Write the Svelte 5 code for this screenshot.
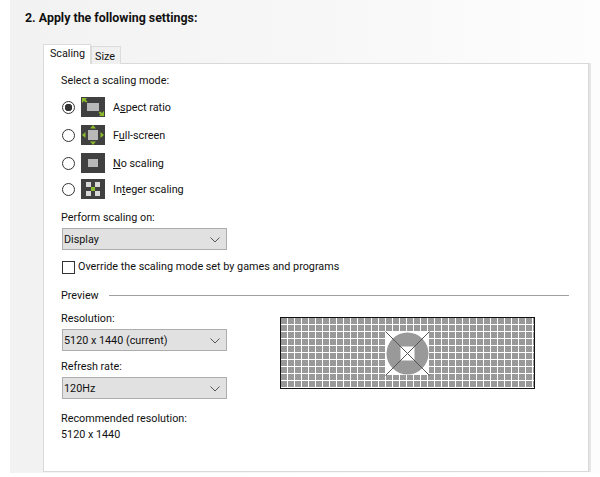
<script lang="ts">
	const modes = [
		{ id: 'aspect', pre: 'A', key: 's', post: 'pect ratio' },
		{ id: 'full', pre: 'F', key: 'u', post: 'll-screen' },
		{ id: 'none', pre: '', key: 'N', post: 'o scaling' },
		{ id: 'integer', pre: 'In', key: 't', post: 'eger scaling' }
	];
	let mode = $state('aspect');
	let override = $state(false);
	let tab = $state('Scaling');
</script>

{#snippet chevron()}
	<svg class="chevron" width="10" height="6" viewBox="0 0 10 6" aria-hidden="true">
		<path d="M0.5 0.5 L5 5 L9.5 0.5" fill="none" stroke="#555" stroke-width="1" />
	</svg>
{/snippet}

{#snippet modeIcon(id: string)}
	<svg width="24" height="20" viewBox="0 0 24 20" aria-hidden="true">
		<rect width="24" height="20" fill="#404040" />
		{#if id === 'aspect'}
			<rect x="6" y="6" width="12" height="8" fill="#b8b8b8" />
			<path d="M1 1h5L4.500 2.500l2 2-1.500 1-2-1.500L1 6z" fill="#8dbb2e" />
			<path d="M23 19h-5l1.500-1.500-2-2 1.500-1 2 1.500L23 14z" fill="#8dbb2e" />
		{:else if id === 'full'}
			<rect x="7" y="5" width="10" height="10" fill="#b8b8b8" />
			<path d="M12 0l3 3.500H9zM12 20l-3-3.500h6zM1 10l3.500-3v6zM23 10l-3.500 3V7z" fill="#8dbb2e" />
		{:else if id === 'none'}
			<rect x="7" y="6" width="10" height="8" fill="#b8b8b8" />
		{:else}
			<rect x="5" y="3" width="5" height="5" fill="#d8d8d8" />
			<rect x="14" y="3" width="5" height="5" fill="#d8d8d8" />
			<rect x="5" y="12" width="5" height="5" fill="#d8d8d8" />
			<rect x="14" y="12" width="5" height="5" fill="#d8d8d8" />
			<rect x="10" y="8" width="4" height="4" fill="#8dbb2e" />
		{/if}
	</svg>
{/snippet}

<main class="page">
	<h2>2. Apply the following settings:</h2>

	<div class="tabs" role="tablist">
		{#each ['Scaling', 'Size'] as name}
			<button type="button" role="tab" class="tab" class:active={tab === name} aria-selected={tab === name} onclick={() => (tab = name)}>
				{name}
			</button>
		{/each}
	</div>

	<section class="panel">
		<p class="label">Select a scaling mode:</p>

		<div class="modes">
			{#each modes as m}
				<label class="mode">
					<input type="radio" name="mode" bind:group={mode} value={m.id} />
					<span class="radio" aria-hidden="true"></span>
					<span class="mode-icon">{@render modeIcon(m.id)}</span>
					<span class="mode-text">{m.pre}<u>{m.key}</u>{m.post}</span>
				</label>
			{/each}
		</div>

		<p class="label perform">Perform scaling on:</p>
		<div class="select">Display {@render chevron()}</div>

		<label class="override">
			<input type="checkbox" bind:checked={override} />
			<span class="box" aria-hidden="true"></span>
			<span>Override the scaling mode set by games and programs</span>
		</label>

		<div class="group-title"><span>Preview</span><hr /></div>

		<div class="preview-row">
			<div class="fields">
				<p class="label">Resolution:</p>
				<div class="select">5120 x 1440 (current) {@render chevron()}</div>
				<p class="label refresh">Refresh rate:</p>
				<div class="select">120Hz {@render chevron()}</div>
			</div>

			<svg class="monitor" width="255" height="72" viewBox="0 0 255 72" aria-hidden="true">
				<defs>
					<pattern id="cells" x="1" y="1" width="7" height="7" patternUnits="userSpaceOnUse">
						<rect width="6" height="6" fill="#999" />
					</pattern>
				</defs>
				<rect x="0.5" y="0.5" width="254" height="71" fill="#fff" stroke="#111" />
				<rect x="1" y="1" width="253" height="70" fill="url(#cells)" />
				<rect x="106" y="15" width="43" height="43" fill="#fff" />
				<circle cx="127.500" cy="36.500" r="21" fill="#999" />
				<rect x="120.500" y="29.500" width="14" height="14" fill="#fff" />
				<path d="M105.500 14.500 L149.500 58.500 M149.500 14.500 L105.500 58.500" stroke="#555" stroke-width="1" />
			</svg>
		</div>

		<p class="label recommended">Recommended resolution:</p>
		<p class="label">5120 x 1440</p>
	</section>
</main>

<style>
	:global(body) {
		background: #fff;
	}

	.page {
		box-sizing: border-box;
		width: 590px;
		height: 473px;
		margin-left: 10px;
		padding: 11px 10px 0 15px;
		overflow: hidden;
		background: linear-gradient(90deg, #f2f2f2 0, #f7f7f7 50%, #fdfdfd 100%);
		color: #111;
		font-family: Roboto, 'Noto Sans', sans-serif;
		font-size: 10.8px;
		line-height: 16px;
	}

	h2 {
		margin: 0;
		font-size: 12.4px;
		font-weight: 700;
		line-height: 14px;
	}

	.tabs {
		display: flex;
		align-items: flex-end;
		height: 20px;
		margin: 19px 0 -1px 18px;
	}

	.tab {
		position: relative;
		box-sizing: border-box;
		height: 18px;
		padding: 2px 5px 0 3px;
		border: 1px solid #dcdcdc;
		border-bottom: 0;
		background: #f0f0f0;
		color: inherit;
		font: inherit;
		line-height: 14px;
	}

	.tab.active {
		z-index: 1;
		width: 48px;
		height: 20px;
		padding: 0 0 2px 1px;
		background: #fff;
	}

	.panel {
		box-sizing: border-box;
		width: 546px;
		height: 409px;
		margin-left: 18px;
		padding: 9px 19px 0 17px;
		border: 1px solid #d9d9d9;
		background: #fff;
		box-shadow: 2px 0 0 #e6e6e6;
	}

	p {
		margin: 0;
	}

	.modes {
		display: flex;
		flex-direction: column;
		gap: 8px;
		margin-top: 8px;
	}

	.mode {
		display: flex;
		align-items: center;
		height: 20px;
	}

	.mode-text {
		padding-top: 2px;
	}

	.mode:last-child {
		margin-top: -2px;
	}

	input {
		position: absolute;
		opacity: 0;
		pointer-events: none;
	}

	.radio {
		box-sizing: border-box;
		width: 13px;
		height: 13px;
		margin: 0 6px 0 1px;
		border: 1px solid #333;
		border-radius: 50%;
		background: #fff;
	}

	input:checked + .radio {
		background: radial-gradient(circle, #333 0 3.5px, #fff 4px);
	}

	.mode-icon {
		display: flex;
		margin-right: 8px;
	}

	.perform {
		margin-top: 11px;
	}

	.select {
		display: flex;
		align-items: center;
		justify-content: space-between;
		box-sizing: border-box;
		width: 165px;
		height: 22px;
		margin: 2px 0 0 1px;
		padding: 2px 6px 0 1px;
		border: 1px solid #adadad;
		background: #e1e1e1;
	}

	.override {
		display: flex;
		align-items: center;
		gap: 3px;
		margin: 9px 0 0 1px;
	}

	.group-title {
		display: flex;
		align-items: center;
		gap: 10px;
		margin-top: 13px;
	}

	.box {
		box-sizing: border-box;
		width: 13px;
		height: 13px;
		border: 1px solid #333;
		background: #fff;
	}

	.group-title hr {
		flex: 1;
		margin: 0 0 2px;
		border: 0;
		border-top: 1px solid #a0a0a0;
	}

	.preview-row {
		display: flex;
		align-items: flex-start;
		gap: 53px;
		margin-top: 7px;
	}

	.refresh {
		margin-top: 8px;
	}

	.monitor {
		margin-top: 6px;
	}

	.recommended {
		margin-top: 12px;
		margin-bottom: 0;
	}
</style>
